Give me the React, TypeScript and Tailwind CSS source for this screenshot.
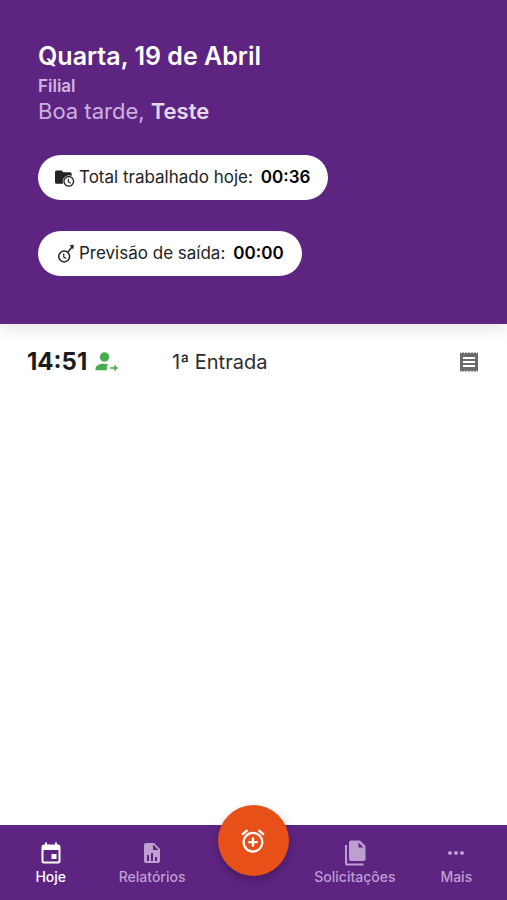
import React from 'react';
import clsx from 'clsx';
import { MdAlarmAdd, MdMoreHoriz, MdReceipt } from 'react-icons/md';

type IconProps = { className?: string };

function FolderClockIcon({ className }: IconProps) {
  return (
    <svg viewBox="0 0 24 24" className={className} fill="currentColor" aria-hidden="true">
      <path d="M2 3h6l2 2h8a2 2 0 0 1 2 2v2.600A7.500 7.500 0 0 0 9.800 19H2a2 2 0 0 1-2-2V5a2 2 0 0 1 2-2z" />
      <circle cx="16.500" cy="16" r="5.800" fill="none" stroke="currentColor" strokeWidth="1.600" />
      <path d="M16 12.500v4l2.800 1.800" fill="none" stroke="currentColor" strokeWidth="1.400" />
    </svg>
  );
}

function ClockOutIcon({ className }: IconProps) {
  return (
    <svg viewBox="0 0 24 24" className={className} fill="none" stroke="currentColor" strokeWidth="1.800" aria-hidden="true">
      <circle cx="11" cy="15" r="6.500" />
      <path d="M10.500 11.500v4l3 1.800" strokeWidth="1.500" />
      <path d="M15.500 9.500l5-6" />
      <path d="M17.500 1.500l5-.5-.5 5.500z" fill="currentColor" stroke="none" />
    </svg>
  );
}

function UserArrowIcon({ className }: IconProps) {
  return (
    <svg viewBox="0 0 24 20" className={className} fill="currentColor" aria-hidden="true">
      <circle cx="10.500" cy="5" r="4.700" />
      <path d="M1.500 18.300v-1.600c0-3.100 3.700-5 8.500-5 1.500 0 2.900.2 4.100.6-1.200 1.500-1.600 3.700-1.100 6z" />
      <path d="M16 15.200h4.300v-2.400l3.700 3.200-3.700 3.200v-2.400H16z" />
    </svg>
  );
}

function CalendarIcon({ className }: IconProps) {
  return (
    <svg viewBox="0 0 24 24" className={className} aria-hidden="true">
      <rect x="3.500" y="4.500" width="17" height="17" rx="1.500" fill="none" stroke="currentColor" strokeWidth="2" />
      <path d="M3 4h18v5H3zM6 1.500h2V4H6zM16 1.500h2V4h-2zM12.500 13h5v5h-5z" fill="currentColor" />
    </svg>
  );
}

function FileChartIcon({ className }: IconProps) {
  return (
    <svg viewBox="0 0 24 24" className={className} fill="currentColor" aria-hidden="true">
      <path d="M13 9h5.500L13 3.500V9M6 2h8l6 6v12a2 2 0 0 1-2 2H6a2 2 0 0 1-2-2V4c0-1.110.890-2 2-2m1 18h2v-6H7v6m4 0h2v-8h-2v8m4 0h2v-4h-2v4z" />
    </svg>
  );
}

function FilesIcon({ className }: IconProps) {
  return (
    <svg viewBox="0 0 24 28" className={className} fill="currentColor" aria-hidden="true">
      <path d="M8 1.500h9l5.500 5.500v13a2 2 0 0 1-2 2H8a2 2 0 0 1-2-2v-16.500a2 2 0 0 1 2-2zM15.500 3.500V8.500h5z" fillRule="evenodd" />
      <path d="M2 6h2v18.500h16.500v2H4a2 2 0 0 1-2-2z" />
    </svg>
  );
}

function SummaryPill({ icon, label, value }: { icon: React.ReactNode; label: string; value: string }) {
  return (
    <div className="flex h-[45px] items-center rounded-full bg-white pr-[18px] pl-[17px] text-[17px] text-[#222]">
      {icon}
      <span className="ml-1">{label}</span>
      <strong className="ml-2 font-semibold text-black">{value}</strong>
    </div>
  );
}

function NavItem({ icon, label, active }: { icon: React.ReactNode; label: string; active?: boolean }) {
  return (
    <button
      type="button"
      aria-current={active ? 'page' : undefined}
      className={clsx(
        'flex flex-col items-center pt-4 text-sm font-medium',
        active ? 'text-white' : 'text-[#bd9fd0]',
      )}
    >
      <span className="flex h-6 items-center">{icon}</span>
      <span className="mt-[2px]">{label}</span>
    </button>
  );
}

export default function App() {
  return (
    <div className="flex min-h-screen flex-col bg-white font-['Inter','Liberation_Sans',sans-serif]">
      {/* Greeting and totals of the day */}
      <header className="bg-[#5d2482] px-[38px] pt-10 pb-12 shadow-[0_4px_16px_rgba(0,0,0,0.12)]">
        <h1 className="text-[25px] leading-8 font-semibold text-white">Quarta, 19 de Abril</h1>
        <p className="mt-1 text-[17px] leading-5 font-semibold text-[#cfb6df]">Filial</p>
        <p className="text-[22px] leading-[30px] text-[#cbb2dc]">
          Boa tarde, <strong className="font-semibold text-[#e3d9ea]">Teste</strong>
        </p>
        <div className="mt-[29px] flex flex-col items-start gap-[31px]">
          <SummaryPill icon={<FolderClockIcon className="size-5" />} label="Total trabalhado hoje:" value="00:36" />
          <SummaryPill icon={<ClockOutIcon className="size-5" />} label="Previsão de saída:" value="00:00" />
        </div>
      </header>

      <main className="flex-1">
        <ul>
          <li className="flex items-center px-[27px] pt-[22px]">
            <div className="flex w-[145px] items-center gap-[7px]">
              <time className="text-2xl font-bold text-[#1c1c1c]">14:51</time>
              <UserArrowIcon className="h-5 w-6 text-[#46ad4f]" />
            </div>
            <span className="flex-1 text-xl text-[#2c2c2c]">1ª Entrada</span>
            <button type="button" aria-label="Comprovante" className="-mr-px text-[#6b6b6b]">
              <MdReceipt className="size-6" />
            </button>
          </li>
        </ul>
      </main>

      <nav className="grid h-[75px] grid-cols-5 bg-[#5d2482]">
        <NavItem active icon={<CalendarIcon className="size-6" />} label="Hoje" />
        <NavItem icon={<FileChartIcon className="size-6" />} label="Relatórios" />
        <div className="flex justify-center">
          <button
            type="button"
            aria-label="Registrar ponto"
            className="-mt-5 flex size-[71px] shrink-0 items-center justify-center rounded-full bg-[#e8501a] text-white shadow-[0_4px_10px_rgba(0,0,0,0.25)]"
          >
            <MdAlarmAdd className="size-7" />
          </button>
        </div>
        <NavItem icon={<FilesIcon className="h-7 w-6" />} label="Solicitações" />
        <NavItem icon={<MdMoreHoriz className="size-6" />} label="Mais" />
      </nav>
    </div>
  );
}
